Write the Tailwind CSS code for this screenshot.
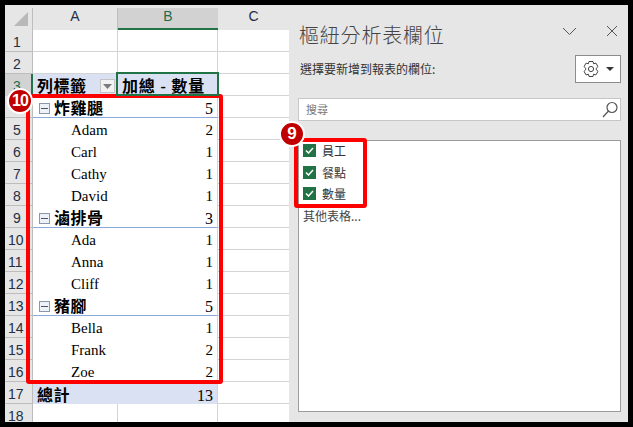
<!doctype html>
<html lang="en">
    <head>
        <meta charset="UTF-8">
        <title>樞紐分析表欄位</title>
        <script src="https://cdn.jsdelivr.net/npm/@tailwindcss/browser@4"></script>
    </head>
    <body class="bg-black">

        <!-- WINDOW -->
        <div class="relative w-[633px] h-[427px] overflow-hidden bg-black p-[5px]">

            <div class="flex h-[417px] w-[623px] bg-white">

                <!-- SHEET -->
                <div class="w-[284px] h-[417px] shrink-0 overflow-hidden font-['Liberation_Serif','Noto_Sans_CJK_TC',serif] text-[15px] leading-[25px] text-black">

                    <!-- TOP STRIP -->
                    <div class="h-[3px] bg-[#e6e6e6]"></div>

                    <!-- COLUMN HEADERS -->
                    <div class="flex h-[22px] bg-[#e6e6e6] font-['Liberation_Sans',sans-serif] text-[14px] leading-[17px] text-[#1f2f45] text-center">
                        <div class="relative w-[28px] border-r border-[#bdbdbd]">
                            <svg class="absolute right-[4px] bottom-[4px]" width="14" height="14"><polygon points="14,0 14,14 0,14" fill="#b9b9b9"/></svg>
                        </div>
                        <div class="w-[85px] border-r border-[#bdbdbd]">A</div>
                        <div class="w-[100px] bg-[#d2d2d2] border-b-2 border-[#217346] text-[#1f6b4a]">B</div>
                        <div class="w-[71px]">C</div>
                    </div>

                    <!-- ROW 1 -->
                    <div class="flex h-[22px]">
                        <div class="w-[28px] pl-[8px] bg-[#e6e6e6] border-r border-b border-[#bdbdbd] font-['Liberation_Sans',sans-serif] text-[14px] text-[#1f2f45]">1</div>
                        <div class="w-[85px] border-r border-b border-[#d4d4d4]"></div>
                        <div class="w-[100px] border-r border-b border-[#d4d4d4]"></div>
                        <div class="w-[71px] border-b border-[#d4d4d4]"></div>
                    </div>

                    <!-- ROW 2 -->
                    <div class="flex h-[22px]">
                        <div class="w-[28px] pl-[8px] bg-[#e6e6e6] border-r border-b border-[#bdbdbd] font-['Liberation_Sans',sans-serif] text-[14px] text-[#1f2f45]">2</div>
                        <div class="w-[85px] border-r border-b border-[#d4d4d4]"></div>
                        <div class="w-[100px] border-r border-b border-[#d4d4d4]"></div>
                        <div class="w-[71px] border-b border-[#d4d4d4]"></div>
                    </div>

                    <!-- ROW 3 -->
                    <div class="flex h-[22px]">
                        <div class="w-[28px] pl-[8px] bg-[#d2d2d2] border-r-2 border-[#217346] font-['Liberation_Sans',sans-serif] text-[14px] text-[#1f6b4a]">3</div>
                        <div class="flex justify-between w-[85px] pl-[4px] pr-[3px] bg-[#d9e1f2] border-b border-[#8ea9db] font-bold text-[16px] tracking-[0.5px]">
                            <span>列標籤</span>
                            <span class="flex items-center justify-center w-[15px] h-[14px] mt-[5px] bg-[#f2f2f2] border border-[#c4c4c4]"><svg width="9" height="5"><polygon points="0,0 9,0 4.5,5" fill="#7b7b7b"/></svg></span>
                        </div>
                        <div class="relative z-10 w-[103px] h-[24px] -ml-[2px] -mr-[1px] -mt-[2px] pl-[4px] bg-[#d9e1f2] border-2 border-[#217346] font-bold text-[16px] tracking-[0.8px] whitespace-nowrap">加總 - 數量</div>
                        <div class="w-[71px] border-b border-[#d4d4d4]"></div>
                    </div>

                    <!-- ROW 4 -->
                    <div class="flex h-[22px]">
                        <div class="w-[28px] pl-[8px] bg-[#e6e6e6] border-r border-b border-[#bdbdbd] font-['Liberation_Sans',sans-serif] text-[14px] text-[#1f2f45]">4</div>
                        <div class="flex items-center w-[85px] pt-[4px] pl-[6px] border-b border-[#8ea9db] font-bold text-[16px] tracking-[0.5px]">
                            <span class="flex items-center justify-center w-[11px] h-[11px] mr-[4px] bg-[#eef1f7] border border-[#8a98ad]"><span class="w-[7px] h-px bg-[#4a5568]"></span></span>
                            <span>炸雞腿</span>
                        </div>
                        <div class="w-[100px] pr-[4px] text-right border-r border-b border-r-[#d4d4d4] border-b-[#8ea9db] text-[16px]">5</div>
                        <div class="w-[71px] border-b border-[#d4d4d4]"></div>
                    </div>

                    <!-- ROW 5 -->
                    <div class="flex h-[22px]">
                        <div class="w-[28px] pl-[8px] bg-[#e6e6e6] border-r border-b border-[#bdbdbd] font-['Liberation_Sans',sans-serif] text-[14px] text-[#1f2f45]">5</div>
                        <div class="w-[85px] pl-[38px]">Adam</div>
                        <div class="w-[100px] pr-[4px] text-right border-r border-[#d4d4d4]">2</div>
                        <div class="w-[71px] border-b border-[#d4d4d4]"></div>
                    </div>

                    <!-- ROW 6 -->
                    <div class="flex h-[22px]">
                        <div class="w-[28px] pl-[8px] bg-[#e6e6e6] border-r border-b border-[#bdbdbd] font-['Liberation_Sans',sans-serif] text-[14px] text-[#1f2f45]">6</div>
                        <div class="w-[85px] pl-[38px]">Carl</div>
                        <div class="w-[100px] pr-[4px] text-right border-r border-[#d4d4d4]">1</div>
                        <div class="w-[71px] border-b border-[#d4d4d4]"></div>
                    </div>

                    <!-- ROW 7 -->
                    <div class="flex h-[22px]">
                        <div class="w-[28px] pl-[8px] bg-[#e6e6e6] border-r border-b border-[#bdbdbd] font-['Liberation_Sans',sans-serif] text-[14px] text-[#1f2f45]">7</div>
                        <div class="w-[85px] pl-[38px]">Cathy</div>
                        <div class="w-[100px] pr-[4px] text-right border-r border-[#d4d4d4]">1</div>
                        <div class="w-[71px] border-b border-[#d4d4d4]"></div>
                    </div>

                    <!-- ROW 8 -->
                    <div class="flex h-[22px]">
                        <div class="w-[28px] pl-[8px] bg-[#e6e6e6] border-r border-b border-[#bdbdbd] font-['Liberation_Sans',sans-serif] text-[14px] text-[#1f2f45]">8</div>
                        <div class="w-[85px] pl-[38px]">David</div>
                        <div class="w-[100px] pr-[4px] text-right border-r border-[#d4d4d4]">1</div>
                        <div class="w-[71px] border-b border-[#d4d4d4]"></div>
                    </div>

                    <!-- ROW 9 -->
                    <div class="flex h-[22px]">
                        <div class="w-[28px] pl-[8px] bg-[#e6e6e6] border-r border-b border-[#bdbdbd] font-['Liberation_Sans',sans-serif] text-[14px] text-[#1f2f45]">9</div>
                        <div class="flex items-center w-[85px] pt-[4px] pl-[6px] border-b border-[#8ea9db] font-bold text-[16px] tracking-[0.5px]">
                            <span class="flex items-center justify-center w-[11px] h-[11px] mr-[4px] bg-[#eef1f7] border border-[#8a98ad]"><span class="w-[7px] h-px bg-[#4a5568]"></span></span>
                            <span>滷排骨</span>
                        </div>
                        <div class="w-[100px] pr-[4px] text-right border-r border-b border-r-[#d4d4d4] border-b-[#8ea9db] text-[16px]">3</div>
                        <div class="w-[71px] border-b border-[#d4d4d4]"></div>
                    </div>

                    <!-- ROW 10 -->
                    <div class="flex h-[22px]">
                        <div class="w-[28px] pl-[3px] bg-[#e6e6e6] border-r border-b border-[#bdbdbd] font-['Liberation_Sans',sans-serif] text-[14px] text-[#1f2f45]">10</div>
                        <div class="w-[85px] pl-[38px]">Ada</div>
                        <div class="w-[100px] pr-[4px] text-right border-r border-[#d4d4d4]">1</div>
                        <div class="w-[71px] border-b border-[#d4d4d4]"></div>
                    </div>

                    <!-- ROW 11 -->
                    <div class="flex h-[22px]">
                        <div class="w-[28px] pl-[3px] bg-[#e6e6e6] border-r border-b border-[#bdbdbd] font-['Liberation_Sans',sans-serif] text-[14px] text-[#1f2f45]">11</div>
                        <div class="w-[85px] pl-[38px]">Anna</div>
                        <div class="w-[100px] pr-[4px] text-right border-r border-[#d4d4d4]">1</div>
                        <div class="w-[71px] border-b border-[#d4d4d4]"></div>
                    </div>

                    <!-- ROW 12 -->
                    <div class="flex h-[22px]">
                        <div class="w-[28px] pl-[3px] bg-[#e6e6e6] border-r border-b border-[#bdbdbd] font-['Liberation_Sans',sans-serif] text-[14px] text-[#1f2f45]">12</div>
                        <div class="w-[85px] pl-[38px]">Cliff</div>
                        <div class="w-[100px] pr-[4px] text-right border-r border-[#d4d4d4]">1</div>
                        <div class="w-[71px] border-b border-[#d4d4d4]"></div>
                    </div>

                    <!-- ROW 13 -->
                    <div class="flex h-[22px]">
                        <div class="w-[28px] pl-[3px] bg-[#e6e6e6] border-r border-b border-[#bdbdbd] font-['Liberation_Sans',sans-serif] text-[14px] text-[#1f2f45]">13</div>
                        <div class="flex items-center w-[85px] pt-[4px] pl-[6px] border-b border-[#8ea9db] font-bold text-[16px] tracking-[0.5px]">
                            <span class="flex items-center justify-center w-[11px] h-[11px] mr-[4px] bg-[#eef1f7] border border-[#8a98ad]"><span class="w-[7px] h-px bg-[#4a5568]"></span></span>
                            <span>豬腳</span>
                        </div>
                        <div class="w-[100px] pr-[4px] text-right border-r border-b border-r-[#d4d4d4] border-b-[#8ea9db] text-[16px]">5</div>
                        <div class="w-[71px] border-b border-[#d4d4d4]"></div>
                    </div>

                    <!-- ROW 14 -->
                    <div class="flex h-[22px]">
                        <div class="w-[28px] pl-[3px] bg-[#e6e6e6] border-r border-b border-[#bdbdbd] font-['Liberation_Sans',sans-serif] text-[14px] text-[#1f2f45]">14</div>
                        <div class="w-[85px] pl-[38px]">Bella</div>
                        <div class="w-[100px] pr-[4px] text-right border-r border-[#d4d4d4]">1</div>
                        <div class="w-[71px] border-b border-[#d4d4d4]"></div>
                    </div>

                    <!-- ROW 15 -->
                    <div class="flex h-[22px]">
                        <div class="w-[28px] pl-[3px] bg-[#e6e6e6] border-r border-b border-[#bdbdbd] font-['Liberation_Sans',sans-serif] text-[14px] text-[#1f2f45]">15</div>
                        <div class="w-[85px] pl-[38px]">Frank</div>
                        <div class="w-[100px] pr-[4px] text-right border-r border-[#d4d4d4]">2</div>
                        <div class="w-[71px] border-b border-[#d4d4d4]"></div>
                    </div>

                    <!-- ROW 16 -->
                    <div class="flex h-[22px]">
                        <div class="w-[28px] pl-[3px] bg-[#e6e6e6] border-r border-b border-[#bdbdbd] font-['Liberation_Sans',sans-serif] text-[14px] text-[#1f2f45]">16</div>
                        <div class="w-[85px] pl-[38px]">Zoe</div>
                        <div class="w-[100px] pr-[4px] text-right border-r border-[#d4d4d4]">2</div>
                        <div class="w-[71px] border-b border-[#d4d4d4]"></div>
                    </div>

                    <!-- ROW 17 -->
                    <div class="flex h-[22px]">
                        <div class="w-[28px] pl-[3px] bg-[#e6e6e6] border-r border-b border-[#bdbdbd] font-['Liberation_Sans',sans-serif] text-[14px] text-[#1f2f45]">17</div>
                        <div class="flex justify-between w-[184px] pl-[4px] pr-[4px] bg-[#d9e1f2] border-t border-[#8ea9db] text-[16px]">
                            <span class="font-bold tracking-[0.5px]">總計</span>
                            <span>13</span>
                        </div>
                        <div class="w-[72px] border-b border-l border-[#d4d4d4]"></div>
                    </div>

                    <!-- ROW 18 -->
                    <div class="flex h-[22px]">
                        <div class="w-[28px] pl-[3px] bg-[#e6e6e6] border-r border-[#bdbdbd] font-['Liberation_Sans',sans-serif] text-[14px] text-[#1f2f45]">18</div>
                        <div class="w-[85px] border-r border-[#d4d4d4]"></div>
                        <div class="w-[100px] border-r border-[#d4d4d4]"></div>
                        <div class="w-[71px]"></div>
                    </div>
                </div>

                <!-- FIELD PANE -->
                <div class="w-[339px] h-[417px] pl-[9px] pr-[7px] bg-[#e6e6e6] font-['Noto_Sans_CJK_TC','Noto_Sans',sans-serif]">

                    <!-- TITLE -->
                    <div class="flex items-center justify-between h-[30px] mt-[15px] pl-[1px]">
                        <span class="text-[20px] leading-[30px] tracking-[0.8px] font-light text-[#444444]">樞紐分析表欄位</span>
                        <div class="flex items-center gap-[29px] pr-[3px] -mt-[8px]">
                            <svg width="15" height="9" fill="none" stroke="#555555"><path d="M1 1 L7.5 7.5 L14 1"/></svg>
                            <svg width="12" height="12" fill="none" stroke="#555555"><path d="M1 1 L11 11 M11 1 L1 11"/></svg>
                        </div>
                    </div>

                    <!-- SUBTITLE AND SETTINGS -->
                    <div class="flex items-center justify-between h-[28px] mt-[5px] pl-[2px]">
                        <span class="text-[12px] text-[#333333]">選擇要新增到報表的欄位:</span>
                        <div class="flex items-center justify-center gap-[6px] w-[46px] h-[28px] bg-white border border-[#8c8c8c]">
                            <svg width="18" height="18" viewBox="0 0 18 18" fill="none" stroke="#444444"><path d="M7 1.5 H11 L11.6 3.8 L13.9 3.1 L16 6.6 L14.3 8.2 V9.8 L16 11.4 L13.9 14.9 L11.6 14.2 L11 16.5 H7 L6.4 14.2 L4.1 14.9 L2 11.4 L3.7 9.8 V8.2 L2 6.6 L4.1 3.1 L6.4 3.8 Z"/><circle cx="9" cy="9" r="2.6"/></svg>
                            <svg width="8" height="4"><polygon points="0,0 8,0 4,4" fill="#333333"/></svg>
                        </div>
                    </div>

                    <!-- SEARCH -->
                    <div class="flex items-center justify-between h-[23px] mt-[15px] pl-[7px] pr-[2px] bg-white border border-[#c6c6c6]">
                        <span class="text-[11px] text-[#777777]">搜尋</span>
                        <svg width="16" height="17" fill="none" stroke="#555555" stroke-width="1.2"><circle cx="10" cy="6.5" r="5"/><path d="M6.5 10 L1 16"/></svg>
                    </div>

                    <!-- FIELD LIST -->
                    <div class="h-[272px] mt-[19px] pl-[4px] bg-white border border-[#9c9c9c] text-[12px] text-[#333333]">
                        <div class="flex items-center gap-[6px] h-[19px] mb-[3px]">
                            <span class="flex items-center justify-center w-[13px] h-[13px] bg-[#217346]"><svg width="9" height="7" fill="none" stroke="#ffffff" stroke-width="1.5"><path d="M1 3.5 L3.5 6 L8 1"/></svg></span>
                            <span>員工</span>
                        </div>
                        <div class="flex items-center gap-[6px] h-[19px] mb-[2px]">
                            <span class="flex items-center justify-center w-[13px] h-[13px] bg-[#217346]"><svg width="9" height="7" fill="none" stroke="#ffffff" stroke-width="1.5"><path d="M1 3.5 L3.5 6 L8 1"/></svg></span>
                            <span>餐點</span>
                        </div>
                        <div class="flex items-center gap-[6px] h-[19px]">
                            <span class="flex items-center justify-center w-[13px] h-[13px] bg-[#217346]"><svg width="9" height="7" fill="none" stroke="#ffffff" stroke-width="1.5"><path d="M1 3.5 L3.5 6 L8 1"/></svg></span>
                            <span>數量</span>
                        </div>
                        <div class="mt-[4px] leading-[18px] text-[#444444]">其他表格...</div>
                    </div>
                </div>
            </div>

            <!-- CALLOUT 10 -->
            <div class="absolute left-[26px] top-[94px] w-[197px] h-[290px] border-4 border-[#ff0000] rounded-[3px]"></div>
            <div class="absolute left-[7px] top-[88px] flex items-center justify-center w-[26px] h-[26px] rounded-full bg-[#c00000] border-2 border-white font-['Liberation_Sans',sans-serif] font-bold text-[16px] tracking-[-1px] text-white">10</div>

            <!-- CALLOUT 9 -->
            <div class="absolute left-[294px] top-[138px] w-[73px] h-[70px] border-4 border-[#ff0000] rounded-[3px]"></div>
            <div class="absolute left-[279px] top-[121px] flex items-center justify-center w-[26px] h-[26px] rounded-full bg-[#c00000] border-2 border-white font-['Liberation_Sans',sans-serif] font-bold text-[17px] text-white">9</div>
        </div>
    </body>
</html>
